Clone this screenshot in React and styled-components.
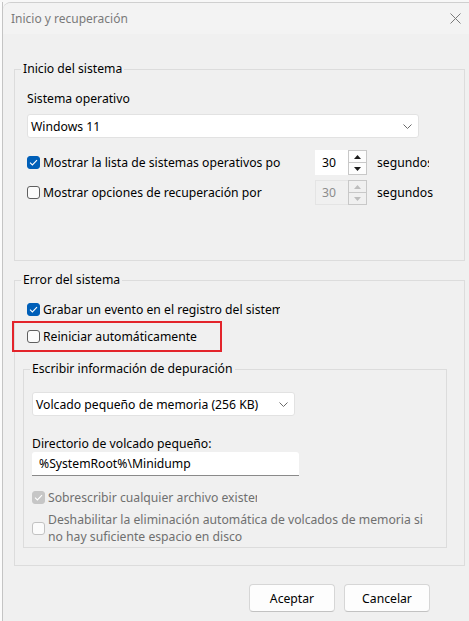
import styled, { createGlobalStyle } from "styled-components";

const GlobalStyle = createGlobalStyle`
  html, body {
    margin: 0;
    padding: 0;
    background: #f7f7f7;
  }
  body {
    font-family: "Noto Sans", "Open Sans", sans-serif;
    font-size: 12.2px;
    color: #000;
  }
`;

const Page = styled.div`
  display: flex;
  width: 469px;
  height: 621px;
  overflow: hidden;
  padding-top: 2px;
  box-sizing: border-box;
`;

const Behind = styled.div`
  width: 2px;
  flex: none;
  background: #fbfbfb;
  border-right: 1px solid #c4c4c4;
`;

const Dialog = styled.div`
  flex: 1;
  display: flex;
  flex-direction: column;
  background: #f0f0f0;
  border-top: 1px solid #cfcfcf;
  border-top-left-radius: 8px;
  overflow: hidden;
`;

const TitleBar = styled.div`
  height: 31px;
  flex: none;
  display: flex;
  align-items: center;
  justify-content: space-between;
  padding: 0 8px 0 8px;
  background: #f3f3f3;
  color: #7a7a7a;
  font-size: 12px;
`;

const Body = styled.div`
  display: flex;
  flex-direction: column;
  padding: 26px 4px 0 11px;
  font-size: 12.2px;
`;

const Group = styled.fieldset`
  margin: ${(p) => p.$top || 0}px 0 0 0;
  padding: 0 12px ${(p) => p.$bottom || 0}px 12px;
  border: 1px solid #dcdcdc;
  min-width: 0;
  display: flex;
  flex-direction: column;
`;

const SubGroup = styled(Group)`
  width: 424px;
  box-sizing: border-box;
  margin-left: -4px;
  padding-left: 8px;
  padding-right: 8px;
`;

const Legend = styled.legend`
  padding: 0 2px;
  margin-left: ${(p) => p.$shift || -6}px;
  line-height: 18px;
`;

const Label = styled.div`
  line-height: ${(p) => p.$lh || 18}px;
  margin-top: ${(p) => p.$top || 0}px;
`;

const Select = styled.div`
  margin-top: ${(p) => p.$top || 0}px;
  width: ${(p) => p.$w}px;
  height: 24px;
  flex: none;
  box-sizing: border-box;
  background: #fff;
  border: 1px solid #e2e2e2;
  border-radius: 3px;
  display: flex;
  align-items: center;
  justify-content: space-between;
  padding: 0 6px 0 3px;
`;

const TextInput = styled.div`
  margin-top: ${(p) => p.$top || 0}px;
  width: 267px;
  height: 24px;
  flex: none;
  box-sizing: border-box;
  background: #fff;
  border-bottom: 1px solid #8a8a8a;
  border-radius: 3px 3px 0 0;
  display: flex;
  align-items: center;
  padding-left: 7px;
`;

const Row = styled.div`
  display: flex;
  align-items: center;
  flex: none;
  margin-top: ${(p) => p.$top || 0}px;
  height: ${(p) => p.$h || 18}px;
  color: ${(p) => (p.$disabled ? "#6f6f6f" : "#000")};
`;

const Box = styled.span`
  width: 13px;
  height: 13px;
  flex: none;
  box-sizing: border-box;
  border-radius: 3px;
  display: flex;
  align-items: center;
  justify-content: center;
  margin-right: 3px;
  background: ${(p) =>
    p.$checked ? (p.$disabled ? "#c6c6c6" : "#005fb8") : "#fbfbfb"};
  border: 1px solid
    ${(p) =>
      p.$checked
        ? p.$disabled
          ? "#c6c6c6"
          : "#005fb8"
        : p.$disabled
        ? "#c2c2c2"
        : "#5f5f5f"};
`;

const Clip = styled.span`
  display: inline-block;
  width: ${(p) => p.$w}px;
  overflow: hidden;
  white-space: nowrap;
  flex: none;
`;

const Spinner = styled.div`
  display: flex;
  height: 25px;
  margin-left: ${(p) => p.$left || 0}px;
  margin-right: 10px;
`;

const SpinValue = styled.div`
  width: 33px;
  box-sizing: border-box;
  display: flex;
  align-items: center;
  padding-left: 6px;
  background: ${(p) => (p.$disabled ? "#f0f0f0" : "#fff")};
  color: ${(p) => (p.$disabled ? "#8c8c8c" : "#000")};
  border: 1px solid ${(p) => (p.$disabled ? "#e4e4e4" : "#fff")};
  border-right: none;
`;

const SpinButtons = styled.div`
  width: 19px;
  display: flex;
  flex-direction: column;
  border: 1px solid #c8c8c8;
  box-sizing: border-box;
`;

const SpinHalf = styled.div`
  flex: 1;
  display: flex;
  align-items: center;
  justify-content: center;
  background: ${(p) => (p.$disabled ? "#f0f0f0" : "#fdfdfd")};
  & + & {
    border-top: 1px solid #c8c8c8;
  }
`;

const Highlight = styled.div`
  margin: 3px 0 0 -15px;
  width: 210px;
  height: 31px;
  flex: none;
  box-sizing: border-box;
  border: 2px solid #e3242b;
  padding-left: 13px;
  display: flex;
  align-items: center;
`;

const TwoLines = styled.div`
  display: flex;
  align-items: center;
  margin-top: 5px;
  color: #6f6f6f;
  line-height: 17px;
  white-space: nowrap;
`;

const Buttons = styled.div`
  display: flex;
  justify-content: flex-end;
  gap: 9px;
  margin-top: 18px;
  padding-right: 35px;
`;

const Button = styled.button`
  width: 86px;
  height: 28px;
  font-family: inherit;
  font-size: 12.2px;
  color: #000;
  background: #fdfdfd;
  border: 1px solid #d6d6d6;
  border-bottom-color: #c2c2c2;
  border-radius: 4px;
  padding: 0;
`;

const Check = ({ color = "#fff" }) => (
  <svg width="9" height="7" viewBox="0 0 9 7">
    <path d="M1 3.6 L3.4 6 L8 1.2" fill="none" stroke={color} strokeWidth="1.1" />
  </svg>
);

const CheckBox = ({ checked, disabled }) => (
  <Box $checked={checked} $disabled={disabled}>
    {checked && <Check />}
  </Box>
);

const Chevron = () => (
  <svg width="9" height="5" viewBox="0 0 9 5">
    <path d="M0.5 0.5 L4.5 4.5 L8.5 0.5" fill="none" stroke="#6a6a6a" strokeWidth="1" />
  </svg>
);

const Arrow = ({ up, color }) => (
  <svg width="7" height="4" viewBox="0 0 7 4">
    <path d={up ? "M0 4 L3.5 0 L7 4 Z" : "M0 0 L3.5 4 L7 0 Z"} fill={color} />
  </svg>
);

const Close = () => (
  <svg width="11" height="11" viewBox="0 0 11 11">
    <path d="M0.5 0.5 L10.5 10.5 M10.5 0.5 L0.5 10.5" stroke="#7a7a7a" strokeWidth="1" />
  </svg>
);

const SpinBox = ({ value, disabled, left }) => {
  const c = disabled ? "#bdbdbd" : "#1a1a1a";
  return (
    <Spinner $left={left}>
      <SpinValue $disabled={disabled}>{value}</SpinValue>
      <SpinButtons>
        <SpinHalf $disabled={disabled}>
          <Arrow up color={c} />
        </SpinHalf>
        <SpinHalf $disabled={disabled}>
          <Arrow color={c} />
        </SpinHalf>
      </SpinButtons>
    </Spinner>
  );
};

export default function App() {
  return (
    <Page>
      <GlobalStyle />
      <Behind />
      <Dialog>
        <TitleBar>
          <span>Inicio y recuperación</span>
          <Close />
        </TitleBar>
        <Body>
          <Group $bottom={55}>
            <Legend>Inicio del sistema</Legend>
            <Label $top={12}>Sistema operativo</Label>
            <Select $top={6} $w={392}>
              <span>Windows 11</span>
              <Chevron />
            </Select>
            <Row $top={12} $h={25}>
              <CheckBox checked />
              <Clip $w={238}>Mostrar la lista de sistemas operativos por</Clip>
              <SpinBox value="30" left={34} />
              <Clip $w={52}>segundos</Clip>
            </Row>
            <Row $top={5} $h={25}>
              <CheckBox />
              <Clip $w={249}>Mostrar opciones de recuperación por</Clip>
              <SpinBox value="30" disabled left={23} />
              <Clip $w={58}>segundos</Clip>
            </Row>
          </Group>

          <Group $top={10} $bottom={17}>
            <Legend>Error del sistema</Legend>
            <Row $top={11}>
              <CheckBox checked />
              <Clip $w={237}>Grabar un evento en el registro del sistema</Clip>
            </Row>
            <Highlight>
              <Row>
                <CheckBox />
                <span>Reiniciar automáticamente</span>
              </Row>
            </Highlight>
            <SubGroup $top={8} $bottom={2}>
              <Legend $shift={-2}>Escribir información de depuración</Legend>
              <Select $top={14} $w={263}>
                <span>Volcado pequeño de memoria (256 KB)</span>
                <Chevron />
              </Select>
              <Label $top={20} $lh={16}>
                Directorio de volcado pequeño:
              </Label>
              <TextInput>%SystemRoot%\Minidump</TextInput>
              <Row $top={12} $disabled>
                <CheckBox checked disabled />
                <Clip $w={209}>Sobrescribir cualquier archivo existente</Clip>
              </Row>
              <TwoLines>
                <CheckBox disabled />
                <span>
                  Deshabilitar la eliminación automática de volcados de memoria si
                  <br />
                  no hay suficiente espacio en disco
                </span>
              </TwoLines>
            </SubGroup>
          </Group>

          <Buttons>
            <Button>Aceptar</Button>
            <Button>Cancelar</Button>
          </Buttons>
        </Body>
      </Dialog>
    </Page>
  );
}
